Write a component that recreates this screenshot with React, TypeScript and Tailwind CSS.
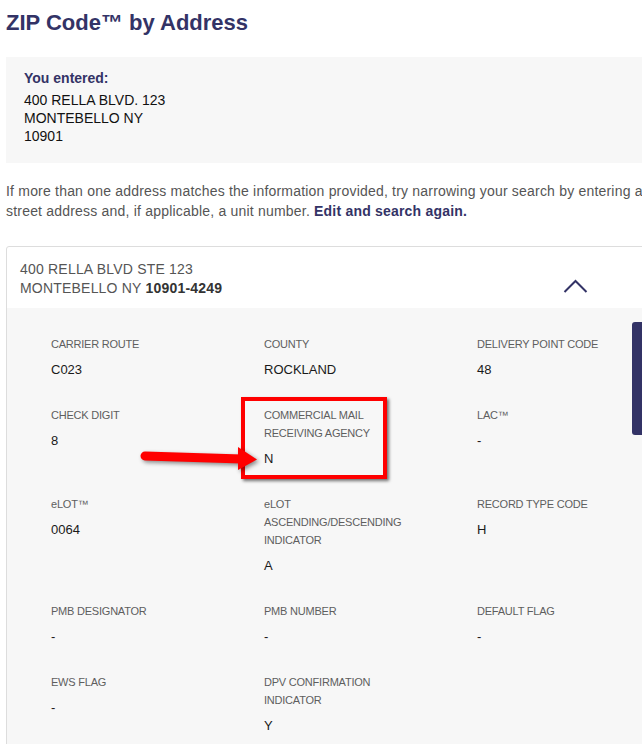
import React from "react";

type Field = { label: string[]; value: string };

const rows: Field[][] = [
  [
    { label: ["CARRIER ROUTE"], value: "C023" },
    { label: ["COUNTY"], value: "ROCKLAND" },
    { label: ["DELIVERY POINT CODE"], value: "48" },
  ],
  [
    { label: ["CHECK DIGIT"], value: "8" },
    { label: ["COMMERCIAL MAIL", "RECEIVING AGENCY"], value: "N" },
    { label: ["LAC™"], value: "-" },
  ],
  [
    { label: ["eLOT™"], value: "0064" },
    { label: ["eLOT", "ASCENDING/DESCENDING", "INDICATOR"], value: "A" },
    { label: ["RECORD TYPE CODE"], value: "H" },
  ],
  [
    { label: ["PMB DESIGNATOR"], value: "-" },
    { label: ["PMB NUMBER"], value: "-" },
    { label: ["DEFAULT FLAG"], value: "-" },
  ],
  [
    { label: ["EWS FLAG"], value: "-" },
    { label: ["DPV CONFIRMATION", "INDICATOR"], value: "Y" },
  ],
];

function Cell({ field }: { field: Field }) {
  return (
    <div>
      <div className="text-[11px] leading-[18px] text-[#5e5e5e] tracking-[-0.02em]">
        {field.label.map((l) => (
          <div key={l}>{l}</div>
        ))}
      </div>
      <div className="mt-2 text-[13px] leading-[18px] text-[#1a1a1a]">{field.value}</div>
    </div>
  );
}

export default function App() {
  return (
    <div className="relative h-[744px] w-[642px] overflow-hidden bg-white font-['Liberation_Sans',Arial,sans-serif]">
      <div className="w-[720px] pl-[6px]">
        <h1 className="pt-2 text-[22px] font-bold leading-[30px] text-[#333366]">
          ZIP Code™ by Address
        </h1>

        <div className="mt-[19px] h-[106px] bg-[#f7f7f7] pl-[18px] pt-[12px] text-[14px] leading-[18px] text-[#111]">
          <div className="mb-1 font-bold text-[#333366]">You entered:</div>
          <div>400 RELLA BLVD. 123</div>
          <div>MONTEBELLO NY</div>
          <div>10901</div>
        </div>

        <p className="mt-[18px] text-[14px] leading-[20px] tracking-[0.2px] text-[#555]">
          If more than one address matches the information provided, try narrowing your search by entering a
          <br />
          street address and, if applicable, a unit number.{" "}
          <span className="font-bold text-[#333366]">Edit and search again.</span>
        </p>

        <div className="mt-[25px] rounded-[3px] border border-[#dddddd]">
          <div className="flex h-[61px] items-start pl-[13px] pt-[13px] text-[14px] leading-[19px] tracking-[0.2px] text-[#555]">
            <div>
              <div>400 RELLA BLVD STE 123</div>
              <div>
                MONTEBELLO NY <span className="font-bold text-[#333]">10901-4249</span>
              </div>
            </div>
            <svg className="ml-[341px] mt-[19px]" width="25" height="14" viewBox="0 0 25 14" fill="none">
              <polyline points="1.5,13 12.5,2 23.5,13" stroke="#333366" strokeWidth="2" />
            </svg>
          </div>

          <div className="grid grid-cols-[213px_213px_213px] gap-y-[27px] bg-[#f7f7f7] pb-10 pl-[44px] pt-[27px]">
            {rows.flat().map((f) => (
              <Cell key={f.label.join(" ")} field={f} />
            ))}
          </div>
        </div>
      </div>

      {/* annotation: red box + arrow */}
      <div className="absolute left-[241px] top-[397px] h-[82px] w-[146px] border-4 border-[#ff0000] shadow-[2px_2px_3px_rgba(0,0,0,0.55)]" />
      <svg
        className="absolute left-[130px] top-[440px] drop-shadow-[2px_2px_2px_rgba(0,0,0,0.45)]"
        width="135"
        height="36"
        viewBox="0 0 135 36"
      >
        <line x1="15" y1="16" x2="112" y2="19" stroke="#ff0000" strokeWidth="9" strokeLinecap="round" />
        <polygon points="108,7 127,19.5 108,30" fill="#ff0000" />
      </svg>

      {/* side tab */}
      <div className="absolute right-0 top-[322px] h-[113px] w-[10px] rounded-l-[3px] bg-[#333366]" />
    </div>
  );
}
